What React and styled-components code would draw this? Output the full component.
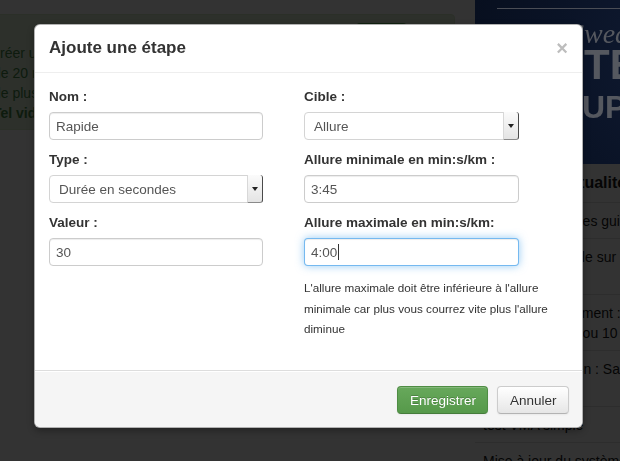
import React from "react";
import styled, { createGlobalStyle } from "styled-components";

const GlobalStyle = createGlobalStyle`
  html, body {
    margin: 0;
    overflow: hidden;
    background: #fff;
    font-family: "Liberation Sans", Arial, sans-serif;
  }
`;

/* page behind the dialog */

const Page = styled.div`
  display: flex;
  gap: 20px;
  margin-left: -22px;
  width: 642px;
  height: 461px;
  overflow: hidden;
`;

const Main = styled.div`
  flex: none;
  width: 477px;
`;

const Alert = styled.div`
  margin-top: 14px;
  padding: 8px 47px 8px 14px;
  background: #dff0d8;
  border: 1px solid #d6e9c6;
  border-radius: 4px;
  color: #468847;
  font-size: 14px;
  box-sizing: border-box;
  height: 116px;
`;

const AlertHead = styled.div`
  display: flex;
  justify-content: flex-end;
  height: 20px;
`;

const AlertButton = styled.div`
  width: 51px;
  height: 26px;
  background: #51a351;
  border-radius: 4px;
`;

const AlertText = styled.p`
  margin: 0;
  line-height: 20px;
  white-space: nowrap;

  strong {
    font-weight: bold;
  }
`;

const Sidebar = styled.div`
  flex: none;
  width: 300px;
`;

const Banner = styled.div`
  position: relative;
  z-index: 2;
  height: 164px;
  overflow: hidden;
  background: radial-gradient(circle at 80% 30%, #121d36 0%, #0a1326 60%, #070e1d 100%);
  padding-top: 8px;
  box-sizing: border-box;
`;

const BannerRule = styled.div`
  height: 1px;
  margin-left: 22px;
  background: #4a4d55;
`;

const BannerScript = styled.div`
  margin-top: 12px;
  padding-left: 95px;
  font-family: "Liberation Serif", "Times New Roman", serif;
  font-style: italic;
  font-size: 28px;
  line-height: 26px;
  color: #55585f;
  white-space: nowrap;
`;

const BannerTitle = styled.div`
  margin-top: ${(p) => p.$gap}px;
  padding-left: ${(p) => p.$indent}px;
  font-size: ${(p) => p.$size}px;
  line-height: ${(p) => p.$line}px;
  font-weight: bold;
  color: #55585f;
  white-space: nowrap;
`;

const News = styled.div`
  background: #fff;
  color: #1a1a1a;
  font-size: 14px;
`;

const NewsHead = styled.div`
  padding: 9px 8px;
  font-size: 16px;
  font-weight: bold;
  line-height: 20px;
  border-bottom: 1px solid #e2e2e2;
  white-space: nowrap;
`;

const NewsItem = styled.div`
  padding: 7.5px 8px;
  line-height: 20px;
  border-bottom: 1px solid #e2e2e2;
  white-space: nowrap;
`;

const Backdrop = styled.div`
  position: fixed;
  inset: 0;
  z-index: 1;
  background: rgba(0, 0, 0, 0.8);
`;

/* dialog */

const Modal = styled.div`
  position: fixed;
  top: 24px;
  left: 34px;
  z-index: 3;
  width: 549px;
  box-sizing: border-box;
  background: #fff;
  border: 1px solid rgba(0, 0, 0, 0.3);
  border-radius: 6px;
  box-shadow: 0 3px 7px rgba(0, 0, 0, 0.3);
  color: #333;
  font-size: 13.5px;
`;

const Header = styled.div`
  display: flex;
  align-items: center;
  justify-content: space-between;
  padding: 8px 14px 9px;
  border-bottom: 1px solid #eee;
`;

const Title = styled.h3`
  margin: 0;
  font-size: 17px;
  line-height: 30px;
  font-weight: bold;
  color: #333;
`;

const Close = styled.span`
  font-size: 20px;
  font-weight: bold;
  line-height: 20px;
  color: #bdbdbd;
  margin-top: -1px;
  cursor: pointer;
`;

const Body = styled.div`
  display: grid;
  grid-template-columns: 214px 1fr;
  column-gap: 41px;
  align-content: start;
  height: 297px;
  box-sizing: border-box;
  padding: 14px 14px;
`;

const Column = styled.div`
  display: flex;
  flex-direction: column;
`;

const Label = styled.label`
  display: block;
  margin-bottom: 5px;
  font-size: 13.5px;
  font-weight: bold;
  line-height: 20px;
  color: #333;
`;

const TextBox = styled.div`
  display: flex;
  align-items: center;
  width: ${(p) => p.$width || "100%"};
  height: 28px;
  box-sizing: border-box;
  margin-bottom: 10px;
  padding: 0 6px;
  background: #fff;
  border: 1px solid ${(p) => (p.$focused ? "rgba(82, 168, 236, 0.8)" : "#ccc")};
  border-radius: 4px;
  box-shadow: ${(p) =>
    p.$focused
      ? "inset 0 1px 1px rgba(0,0,0,.075), 0 0 8px rgba(82,168,236,.6)"
      : "inset 0 1px 1px rgba(0,0,0,.075)"};
  color: #555;
  font-size: 13.5px;
`;

const Caret = styled.span`
  display: inline-block;
  width: 1px;
  height: 16px;
  margin-left: 1px;
  background: #333;
`;

const SelectBox = styled.div`
  display: flex;
  align-items: stretch;
  width: ${(p) => p.$width || "100%"};
  height: 28px;
  box-sizing: border-box;
  margin-bottom: 10px;
  background: #fff;
  border: 1px solid #d4d4d4;
  border-radius: 4px;
  color: #555;
  font-size: 13.5px;
`;

const SelectValue = styled.span`
  flex: 1;
  display: flex;
  align-items: center;
  padding-left: 9px;
`;

const SelectArrow = styled.span`
  display: flex;
  align-items: center;
  justify-content: center;
  width: 14px;
  margin: -1px -1px -1px 0;
  background: linear-gradient(#fbfbfb, #e4e4e4);
  border-left: 1px solid #d8d8d8;
  border-right: 1px solid #4a4a4a;
  border-bottom: 1px solid #8a8a8a;
  border-radius: 0 3px 3px 0;

  &::after {
    content: "";
    border-left: 3px solid transparent;
    border-right: 3px solid transparent;
    border-top: 4px solid #222;
  }
`;

const Help = styled.p`
  margin: 2px 0 0;
  font-size: 11.7px;
  line-height: 20.5px;
  color: #333;
`;

const Footer = styled.div`
  display: flex;
  justify-content: flex-end;
  gap: 9px;
  padding: 15px 13px 13px;
  background: #f5f5f5;
  border-top: 1px solid #ddd;
  border-radius: 0 0 6px 6px;
  box-shadow: inset 0 1px 0 #fff;
`;

const Button = styled.button`
  height: 28px;
  padding: 0 11.5px;
  font-family: inherit;
  font-size: 13.5px;
  border-radius: 4px;
  cursor: pointer;
  color: ${(p) => (p.$primary ? "#fff" : "#333")};
  background: ${(p) =>
    p.$primary
      ? "linear-gradient(#67a85b, #56994a)"
      : "linear-gradient(#fff, #e6e6e6)"};
  border: 1px solid ${(p) => (p.$primary ? "#4f8d44" : "#ccc")};
  border-bottom-color: ${(p) => (p.$primary ? "#457c3b" : "#b3b3b3")};
  text-shadow: ${(p) =>
    p.$primary ? "0 -1px 0 rgba(0,0,0,.2)" : "0 1px 1px rgba(255,255,255,.75)"};
  box-shadow: inset 0 1px 0 rgba(255, 255, 255, 0.2), 0 1px 2px rgba(0, 0, 0, 0.05);
`;

export default function App() {
  return (
    <>
      <GlobalStyle />
      <Page>
        <Main>
          <Alert>
            <AlertHead>
              <AlertButton />
            </AlertHead>
            <AlertText>
              créer un entraînement personnalisé
              <br />
              de 20 minutes à 2 heures
              <br />
              de plus en plus rapide
              <br />
              <strong>Tel vidéo</strong>
            </AlertText>
          </Alert>
        </Main>
        <Sidebar>
          <Banner>
            <BannerRule />
            <BannerScript>Sweat</BannerScript>
            <BannerTitle $gap={0} $indent={109} $size={42} $line={36}>
              TEMPS
            </BannerTitle>
            <BannerTitle $gap={7} $indent={107} $size={32} $line={34}>
              UPDATE
            </BannerTitle>
          </Banner>
          <News>
            <NewsHead>Dernières actualités</NewsHead>
            <NewsItem>Consultez tous les guides</NewsItem>
            <NewsItem>
              Préparation finale sur 10 km
              <br />
              du semi
            </NewsItem>
            <NewsItem>
              Nouvel entraînement : rythme
              <br />
              Semi-marathon ou 10 km
            </NewsItem>
            <NewsItem>
              Prochaine édition : Saclay
              <br />
              Trail
            </NewsItem>
            <NewsItem>test VMA simple</NewsItem>
            <NewsItem>Mise à jour du système</NewsItem>
          </News>
        </Sidebar>
      </Page>
      <Backdrop />
      <Modal>
        <Header>
          <Title>Ajoute une étape</Title>
          <Close>×</Close>
        </Header>
        <Body>
          <Column>
            <Label>Nom :</Label>
            <TextBox>Rapide</TextBox>
            <Label>Type :</Label>
            <SelectBox>
              <SelectValue>Durée en secondes</SelectValue>
              <SelectArrow />
            </SelectBox>
            <Label>Valeur :</Label>
            <TextBox>30</TextBox>
          </Column>
          <Column>
            <Label>Cible :</Label>
            <SelectBox $width="215px">
              <SelectValue>Allure</SelectValue>
              <SelectArrow />
            </SelectBox>
            <Label>Allure minimale en min:s/km :</Label>
            <TextBox $width="215px">3:45</TextBox>
            <Label>Allure maximale en min:s/km:</Label>
            <TextBox $width="215px" $focused>
              4:00
              <Caret />
            </TextBox>
            <Help>
              L'allure maximale doit être inférieure à l'allure minimale car
              plus vous courrez vite plus l'allure diminue
            </Help>
          </Column>
        </Body>
        <Footer>
          <Button $primary>Enregistrer</Button>
          <Button>Annuler</Button>
        </Footer>
      </Modal>
    </>
  );
}
